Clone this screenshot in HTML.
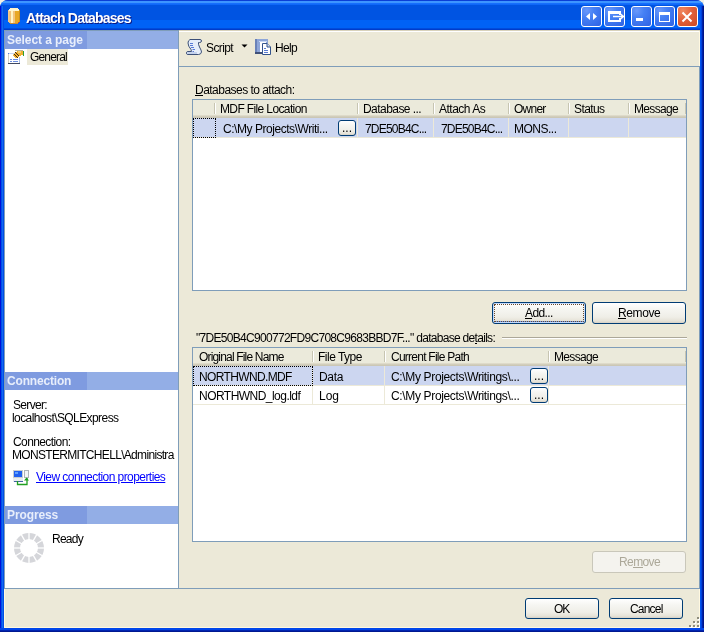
<!DOCTYPE html>
<html><head><meta charset="utf-8">
<style>
*{box-sizing:border-box}
html,body{margin:0;padding:0;width:704px;height:632px;overflow:hidden;background:#F2F0E4}
body{position:relative;font-family:"Liberation Sans",sans-serif;font-size:11px;color:#000}
.a{position:absolute}
.t{position:absolute;white-space:pre;will-change:transform;font-size:12px;line-height:13px;margin-top:1px}
.win{left:0;top:0;width:704px;height:632px;border-radius:8px 8px 0 0;overflow:hidden;background:#0055EA}
.title{left:0;top:0;width:704px;height:30px;border-radius:8px 8px 0 0;background:linear-gradient(to bottom,#0A3FD6 0px,#0A3FD6 1px,#3D95FF 1px,#3D95FF 3px,#1A72FF 3px,#0A64F5 5px,#0054E2 5px,#0054E2 20px,#0062F6 20px,#0062F6 28px,#004CDC 28px,#004CDC 29px,#003CCC 29px,#003CCC 30px)}
.frameL{left:0;top:6px;width:4px;height:626px;background:linear-gradient(to right,#0010D8 0,#0010D8 1px,#0050EA 1px,#0050EA 2px,#1468F0 2px,#1468F0 3px,#0050E6 3px)}
.frameR{left:700px;top:6px;width:4px;height:626px;background:linear-gradient(to right,#0054F0 0,#0054F0 1px,#0042DC 1px,#0042DC 2px,#0022A8 2px,#0022A8 3px,#001488 3px)}
.frameB{left:0;top:628px;width:704px;height:4px;background:linear-gradient(to bottom,#0046EA 0,#0046EA 2px,#0024B0 2px,#0024B0 3px,#001890 3px)}
.client{left:4px;top:30px;width:696px;height:598px;background:#ECE9D8;box-shadow:inset 1px 0 #FFF8E0,inset -1px 0 #FFF8E0,inset 0 -1px #FFF8E0}
.ttl{left:26px;top:9px;font-size:14px;font-weight:bold;color:#fff;line-height:16px;text-shadow:1px 1px 0 #0A1883;letter-spacing:-0.8px}
.tb{width:21px;height:21px;top:6px;border:1px solid #fff;border-radius:3px;background:radial-gradient(circle at 25% 20%,#6A98FA 0,#4680F4 35%,#2E62E4 100%)}
.tb.close{background:radial-gradient(circle at 25% 20%,#F08860 0,#E2603A 45%,#CC4A22 100%)}
.lp{left:4px;top:30px;width:175px;height:559px;border:1px solid #7F9DB9;background:#fff}
.hdr{left:5px;width:173px;height:18px;background:#93AEE6}
.hdr .dk{left:0;top:0;width:82px;height:18px;background:#7F9BE0}
.hdr .ht{left:2px;top:2px;font-weight:bold;color:#E8EEFB;font-size:12px;line-height:13px;letter-spacing:-0.4px}
.rp{left:178px;top:66px;width:522px;height:523px;border:1px solid #7F9DB9;background:#ECE9D8}
.grid{border:1px solid #7F9DB9;background:#fff;overflow:hidden}
.gh{top:0;height:18px;background:linear-gradient(to bottom,#EBEADB 0,#EBEADB 15px,#E4E1D0 15px,#D8D4C3 16px,#CBC7B5 17px)}
.gsep{width:1px;top:3px;height:11px;background:#C7C5B2;box-shadow:1px 0 0 #fff}
.sel{background:#CCD6F0}
.btn{border:1px solid #003C74;border-radius:3px;background:linear-gradient(to bottom,#FFFFFF 0,#F6F6F2 30%,#EFEEE7 70%,#E5E2D7 90%,#D6D0C5 100%)}
.lnk{color:#0000FF;text-decoration:underline}
u{text-decoration:none;position:relative}
u::after{content:"";position:absolute;left:0;right:0;bottom:1px;height:1px;background:currentColor}
</style></head><body>
<div class="a win"></div>
<div class="a title"></div>
<div class="a frameL"></div>
<div class="a frameR"></div>
<div class="a frameB"></div>
<div class="a client"></div>

<!-- title icon -->
<svg class="a" style="left:8px;top:8px" width="12" height="16" viewBox="0 0 12 16" shape-rendering="crispEdges">
  <rect x="0" y="2" width="12" height="12" fill="#F2C27A"/>
  <rect x="1" y="1" width="10" height="14" fill="#F2C27A"/>
  <rect x="0" y="2" width="1" height="12" fill="#F4C88A"/>
  <rect x="3" y="2" width="2" height="13" fill="#FFF4C4"/>
  <rect x="5" y="2" width="2" height="13" fill="#F2C480"/>
  <rect x="7" y="2" width="4" height="13" fill="#E8A826"/>
  <rect x="11" y="2" width="1" height="12" fill="#C8901E"/>
  <rect x="2" y="0" width="8" height="1" fill="#FFF0C8"/>
  <rect x="1" y="1" width="10" height="2" fill="#FFF6D2"/>
  <rect x="2" y="15" width="8" height="1" fill="#C88A30"/>
  <rect x="10" y="14" width="1" height="1" fill="#E04020"/>
</svg>
<div class="t ttl">Attach Databases</div>

<!-- title buttons -->
<div class="a tb" style="left:581px"></div>
<div class="a tb" style="left:604px"></div>
<div class="a tb" style="left:631px"></div>
<div class="a tb" style="left:654px"></div>
<div class="a tb close" style="left:677px"></div>
<svg class="a" style="left:581px;top:6px" width="120" height="21" viewBox="0 0 120 21">
  <path d="M9 7 L5 10.5 L9 14 Z M12 7 L16 10.5 L12 14 Z" fill="#fff"/>
  <path d="M28 6 H39 V9 M28 6 V15 H39 V12" fill="none" stroke="#fff" stroke-width="2"/>
  <rect x="27" y="5" width="12" height="3" fill="#fff"/>
  <path d="M32 10.5 H42 M39.5 8 L42.5 10.5 L39.5 13" fill="none" stroke="#fff" stroke-width="1.5"/>
  <rect x="55" y="12" width="7" height="3" fill="#fff"/>
  <rect x="78.5" y="6.5" width="10" height="9" fill="none" stroke="#fff" stroke-width="1"/>
  <rect x="78" y="6" width="11" height="3" fill="#fff"/>
  <path d="M101.5 6.5 L110.5 15.5 M110.5 6.5 L101.5 15.5" stroke="#fff" stroke-width="2"/>
</svg>

<!-- left panel -->
<div class="a lp"></div>
<div class="a hdr" style="top:31px"><div class="a dk"></div><div class="t ht" style="letter-spacing:-0.07px">Select a page</div></div>
<svg class="a" style="left:8px;top:50px" width="16" height="15" viewBox="0 0 16 15" shape-rendering="crispEdges">
  <rect x="0" y="3" width="12" height="11" fill="#FFFFFF"/>
  <rect x="0" y="3" width="1" height="10" fill="#D4D0C4"/>
  <rect x="1" y="3" width="7" height="1" fill="#C8D4F0"/>
  <rect x="0" y="3" width="1" height="1" fill="#5A7CD8"/>
  <rect x="11" y="7" width="1" height="6" fill="#A8BCE4"/>
  <rect x="0" y="13" width="12" height="1" fill="#404860"/>
  <rect x="2" y="9" width="2" height="1" fill="#6A8CE0"/><rect x="5" y="9" width="5" height="1" fill="#6A8CE0"/>
  <rect x="2" y="11" width="2" height="1" fill="#6A8CE0"/><rect x="5" y="11" width="5" height="1" fill="#6A8CE0"/>
  <rect x="7" y="0" width="8" height="1" fill="#B8B4A0"/>
  <path d="M5 6 L7 3 L9 1 L15 1 L15 5 L11 6 L9 8 L7 8 Z" fill="#F2B030"/>
  <path d="M4 5 L6 3 L7 3 L5 6 Z" fill="#E8C890"/>
  <g fill="#402810"><rect x="7" y="2" width="1" height="1"/><rect x="6" y="4" width="1" height="1"/><rect x="8" y="3" width="1" height="1"/><rect x="7" y="5" width="1" height="1"/><rect x="9" y="4" width="1" height="1"/><rect x="8" y="6" width="1" height="1"/><rect x="10" y="5" width="1" height="1"/><rect x="9" y="7" width="1" height="1"/></g>
  <rect x="10" y="1" width="3" height="2" fill="#F8D070"/>
  <rect x="15" y="1" width="1" height="5" fill="#30A030"/>
</svg>
<div class="a" style="left:27px;top:49px;width:41px;height:16px;background:#ECE9D8"></div>
<div class="t" id="t_general" style="left:30px;top:50px;letter-spacing:-0.833px">General</div>

<div class="a hdr" style="top:372px"><div class="a dk"></div><div class="t ht" style="letter-spacing:-0.18px">Connection</div></div>
<div class="t" id="t_server" style="left:13px;top:398px;letter-spacing:-0.667px">Server:</div>
<div class="t" id="t_localhost" style="left:12px;top:411px;letter-spacing:-0.579px">localhost\SQLExpress</div>
<div class="t" id="t_conn" style="left:13px;top:435px;letter-spacing:-0.600px">Connection:</div>
<div class="t" id="t_monster" style="left:12px;top:448px;letter-spacing:-0.680px">MONSTERMITCHELL\Administra</div>
<svg class="a" style="left:13px;top:469px" width="17" height="17" viewBox="0 0 17 17">
  <rect x="0" y="1" width="10" height="8" fill="#C8CCD0"/>
  <rect x="1" y="2" width="8" height="6" fill="#2060F0"/>
  <rect x="2" y="3" width="3" height="2" fill="#60A0FF"/>
  <rect x="0" y="9" width="10" height="4" fill="#E8ECF0"/>
  <rect x="1" y="12" width="9" height="1" fill="#4060A0"/>
  <rect x="11" y="1" width="5" height="8" fill="#B0B4B8"/>
  <rect x="12" y="2" width="3" height="6" fill="#F4F6F8"/>
  <path d="M4.5 12 V15.5 H14 V9" fill="none" stroke="#20A020" stroke-width="1.3"/>
  <path d="M11 11.5 L13.5 8.5 L16 11.5 Z" fill="#20A020"/>
</svg>
<div class="t lnk" id="t_view" style="left:36px;top:470px;letter-spacing:-0.560px">View connection properties</div>

<div class="a hdr" style="top:506px"><div class="a dk"></div><div class="t ht" style="letter-spacing:-0.11px">Progress</div></div>
<svg class="a" style="left:13px;top:532px" width="32" height="32" viewBox="-16 -16 32 32">
  <circle cx="0" cy="0" r="12" fill="none" stroke="#D5D6DA" stroke-width="6"/>
  <g stroke="#FFFFFF" stroke-width="1.3"><line x1="0" y1="-8" x2="0" y2="-16" transform="rotate(0)"/><line x1="0" y1="-8" x2="0" y2="-16" transform="rotate(30)"/><line x1="0" y1="-8" x2="0" y2="-16" transform="rotate(60)"/><line x1="0" y1="-8" x2="0" y2="-16" transform="rotate(90)"/><line x1="0" y1="-8" x2="0" y2="-16" transform="rotate(120)"/><line x1="0" y1="-8" x2="0" y2="-16" transform="rotate(150)"/><line x1="0" y1="-8" x2="0" y2="-16" transform="rotate(180)"/><line x1="0" y1="-8" x2="0" y2="-16" transform="rotate(210)"/><line x1="0" y1="-8" x2="0" y2="-16" transform="rotate(240)"/><line x1="0" y1="-8" x2="0" y2="-16" transform="rotate(270)"/><line x1="0" y1="-8" x2="0" y2="-16" transform="rotate(300)"/><line x1="0" y1="-8" x2="0" y2="-16" transform="rotate(330)"/></g>
</svg>
<div class="t" id="t_ready" style="left:52px;top:532px;letter-spacing:-0.750px">Ready</div>

<!-- toolbar -->
<div class="a" style="left:179px;top:30px;width:521px;height:1px;background:#D8D2BC"></div>
<div class="a" style="left:179px;top:31px;width:520px;height:1px;background:#fff"></div>
<svg class="a" style="left:186px;top:39px" width="16" height="16" viewBox="0 0 16 16">
  <path d="M4 0.5 H14 Q15.5 0.5 15.5 2 Q15.5 3.5 13.5 3.5 H12.5 Q12 5 13.5 8 Q15.5 11.5 15.5 13 Q15 15.5 12.5 15.5 H2 Q0.5 15.5 0.5 14 Q0.5 12.5 2 12.5 H5.5 L5 10.5 Q2 7 2 4 Q2 1.5 4 0.5 Z" fill="#E6EEFA" stroke="#3C5078" stroke-width="1"/>
  <path d="M4 4.5 H7 M4 6.5 H7 M5 8.5 H8 M6.5 10.5 H9 M6.5 12.5 H8" stroke="#5A7CD6" stroke-width="1"/>
  <rect x="1" y="13" width="10" height="2" fill="#C4D2EC"/>
</svg>
<div class="t" id="t_script" style="left:206px;top:41px;letter-spacing:-0.600px">Script</div>
<svg class="a" style="left:241px;top:44px" width="7" height="4"><path d="M0.5 0.5 H6.5 L3.5 3.5 Z" fill="#000"/></svg>
<svg class="a" style="left:255px;top:39px" width="17" height="17" viewBox="0 0 17 17">
  <rect x="0" y="0" width="13" height="14" fill="#8EA6D8"/>
  <rect x="0" y="0" width="2" height="14" fill="#6A82B8"/>
  <rect x="0" y="13" width="13" height="2" fill="#405078"/>
  <rect x="4" y="2" width="8" height="1" fill="#C8D8F4"/>
  <rect x="5" y="3" width="6" height="10" fill="#FFFFFF"/>
  <path d="M7.5 4.5 H12 L15.5 8 V15.5 H7.5 Z" fill="#FFFFFF" stroke="#34548C" stroke-width="1"/>
  <path d="M12 4.5 V8 H15.5" fill="#D0DCF0" stroke="#34548C" stroke-width="1"/>
  <rect x="9" y="9" width="2" height="1" fill="#5A7CD0"/>
  <rect x="9" y="11" width="4" height="1" fill="#5A7CD0"/>
  <rect x="9" y="13" width="4" height="1" fill="#5A7CD0"/>
</svg>
<div class="t" id="t_help" style="left:275px;top:41px;letter-spacing:-0.667px">Help</div>

<!-- right panel -->
<div class="a rp"></div>
<div class="t" id="t_dbattach" style="left:195px;top:83px;letter-spacing:-0.527px"><u>D</u>atabases to attach:</div>

<!-- grid 1 -->
<div class="a grid" style="left:192px;top:99px;width:495px;height:192px">
  <div class="a gh" style="left:0;width:493px"></div>
  <div class="a gsep" style="left:21px"></div>
  <div class="a gsep" style="left:164px"></div>
  <div class="a gsep" style="left:240px"></div>
  <div class="a gsep" style="left:315px"></div>
  <div class="a gsep" style="left:375px"></div>
  <div class="a gsep" style="left:435px"></div>
  <div class="a gsep" style="left:492px"></div>
  <div class="t" id="h_mdf" style="left:27px;top:2px;letter-spacing:-0.625px">MDF File Location</div>
  <div class="t" id="h_db" style="left:170px;top:2px;letter-spacing:-0.546px">Database ...</div>
  <div class="t" id="h_as" style="left:246px;top:2px;letter-spacing:-0.500px">Attach As</div>
  <div class="t" id="h_owner" style="left:321px;top:2px;letter-spacing:-0.750px">Owner</div>
  <div class="t" id="h_status" style="left:381px;top:2px;letter-spacing:-0.600px">Status</div>
  <div class="t" id="h_msg" style="left:441px;top:2px;letter-spacing:-0.667px">Message</div>
  <div class="a sel" style="left:0;top:18px;width:493px;height:19px"></div>
  <div class="a" style="left:0;top:37px;width:493px;height:1px;background:#ECE9D8"></div>
  <div class="a" style="left:164px;top:18px;width:1px;height:20px;background:#ECE9D8"></div>
  <div class="a" style="left:240px;top:18px;width:1px;height:20px;background:#ECE9D8"></div>
  <div class="a" style="left:315px;top:18px;width:1px;height:20px;background:#ECE9D8"></div>
  <div class="a" style="left:375px;top:18px;width:1px;height:20px;background:#ECE9D8"></div>
  <div class="a" style="left:435px;top:18px;width:1px;height:20px;background:#ECE9D8"></div>
  <div class="a" style="left:0;top:18px;width:23px;height:20px;border:1px dotted #000"></div>
  <div class="t" id="c_path1" style="left:30px;top:22px;letter-spacing:-0.454px">C:\My Projects\Writi...</div>
  <div class="a btn" style="left:145px;top:20px;width:18px;height:16px"></div>
  <div class="t" style="left:149px;top:21px">...</div>
  <div class="t" id="c_db1" style="left:172px;top:22px;letter-spacing:-0.800px">7DE50B4C...</div>
  <div class="t" id="c_as1" style="left:248px;top:22px;letter-spacing:-0.800px">7DE50B4C...</div>
  <div class="t" id="c_owner1" style="left:321px;top:22px;letter-spacing:-0.500px">MONS...</div>
</div>

<div class="a btn" style="left:492px;top:302px;width:94px;height:22px;box-shadow:inset 0 0 0 1px #C4DAFC, inset 0 -2px 0 0 #6C98EC"></div>
<div class="a" style="left:494px;top:304px;width:90px;height:18px;border:1px dotted #6B4A2A"></div>
<div class="t" id="b_add" style="left:525px;top:306px;letter-spacing:-0.600px"><u>A</u>dd...</div>
<div class="a btn" style="left:592px;top:302px;width:94px;height:22px"></div>
<div class="t" id="b_remove" style="left:618px;top:306px;letter-spacing:-0.400px"><u>R</u>emove</div>

<div class="t" id="t_details" style="left:196px;top:331px;letter-spacing:-0.698px">"7DE50B4C900772FD9C708C9683BBD7F..." database de<u>t</u>ails:</div>
<div class="a" style="left:502px;top:337px;width:185px;height:1px;background:#ACA899"></div>
<div class="a" style="left:502px;top:338px;width:185px;height:1px;background:#fff"></div>

<!-- grid 2 -->
<div class="a grid" style="left:192px;top:347px;width:495px;height:195px">
  <div class="a gh" style="left:0;width:493px"></div>
  <div class="a gsep" style="left:119px"></div>
  <div class="a gsep" style="left:191px"></div>
  <div class="a gsep" style="left:355px"></div>
  <div class="a gsep" style="left:492px"></div>
  <div class="t" id="h_orig" style="left:6px;top:2px;letter-spacing:-0.824px">Original File Name</div>
  <div class="t" id="h_type" style="left:125px;top:2px;letter-spacing:-0.500px">File Type</div>
  <div class="t" id="h_cur" style="left:198px;top:2px;letter-spacing:-0.750px">Current File Path</div>
  <div class="t" id="h_msg2" style="left:361px;top:2px;letter-spacing:-0.667px">Message</div>
  <div class="a sel" style="left:0;top:18px;width:493px;height:19px"></div>
  <div class="a" style="left:0;top:37px;width:493px;height:1px;background:#ECE9D8"></div>
  <div class="a" style="left:0;top:56px;width:493px;height:1px;background:#ECE9D8"></div>
  <div class="a" style="left:119px;top:18px;width:1px;height:39px;background:#ECE9D8"></div>
  <div class="a" style="left:191px;top:18px;width:1px;height:39px;background:#ECE9D8"></div>
  <div class="a" style="left:355px;top:18px;width:1px;height:39px;background:#ECE9D8"></div>
  <div class="a" style="left:0;top:18px;width:120px;height:20px;border:1px dotted #000"></div>
  <div class="t" id="c_nw1" style="left:6px;top:22px;letter-spacing:-0.636px">NORTHWND.MDF</div>
  <div class="t" id="c_data" style="left:126px;top:22px;letter-spacing:-0.334px">Data</div>
  <div class="t" id="c_cp1" style="left:198px;top:22px;letter-spacing:-0.347px">C:\My Projects\Writings\...</div>
  <div class="a btn" style="left:337px;top:20px;width:18px;height:16px"></div>
  <div class="t" style="left:341px;top:21px">...</div>
  <div class="t" id="c_nw2" style="left:6px;top:41px;letter-spacing:-0.533px">NORTHWND_log.ldf</div>
  <div class="t" id="c_log" style="left:126px;top:41px">Log</div>
  <div class="t" id="c_cp2" style="left:198px;top:41px;letter-spacing:-0.347px">C:\My Projects\Writings\...</div>
  <div class="a btn" style="left:337px;top:39px;width:18px;height:16px"></div>
  <div class="t" style="left:341px;top:40px">...</div>
</div>

<div class="a" style="left:592px;top:551px;width:94px;height:22px;border:1px solid #C9C7BA;border-radius:3px;background:#F4F3EE"></div>
<div class="t" id="b_rem2" style="left:619px;top:555px;color:#ACA899;letter-spacing:-0.600px">Re<u>m</u>ove</div>

<!-- bottom buttons -->
<div class="a" style="left:4px;top:588px;width:696px;height:1px;background:#7F9DB9"></div>
<div class="a btn" style="left:525px;top:598px;width:74px;height:21px"></div>
<div class="t" id="b_ok" style="left:554px;top:602px;letter-spacing:-1.000px">OK</div>
<div class="a btn" style="left:609px;top:598px;width:74px;height:21px"></div>
<div class="t" id="b_cancel" style="left:630px;top:602px;letter-spacing:-0.800px">Cancel</div>
<svg class="a" style="left:689px;top:617px" width="11" height="11" viewBox="0 0 11 11">
  <g fill="#FFFFFF"><rect x="9" y="1" width="2" height="2"/><rect x="5" y="5" width="2" height="2"/><rect x="9" y="5" width="2" height="2"/><rect x="1" y="9" width="2" height="2"/><rect x="5" y="9" width="2" height="2"/><rect x="9" y="9" width="2" height="2"/></g>
  <g fill="#8E8C7C"><rect x="8" y="0" width="2" height="2"/><rect x="4" y="4" width="2" height="2"/><rect x="8" y="4" width="2" height="2"/><rect x="0" y="8" width="2" height="2"/><rect x="4" y="8" width="2" height="2"/><rect x="8" y="8" width="2" height="2"/></g>
</svg>
</body></html>
